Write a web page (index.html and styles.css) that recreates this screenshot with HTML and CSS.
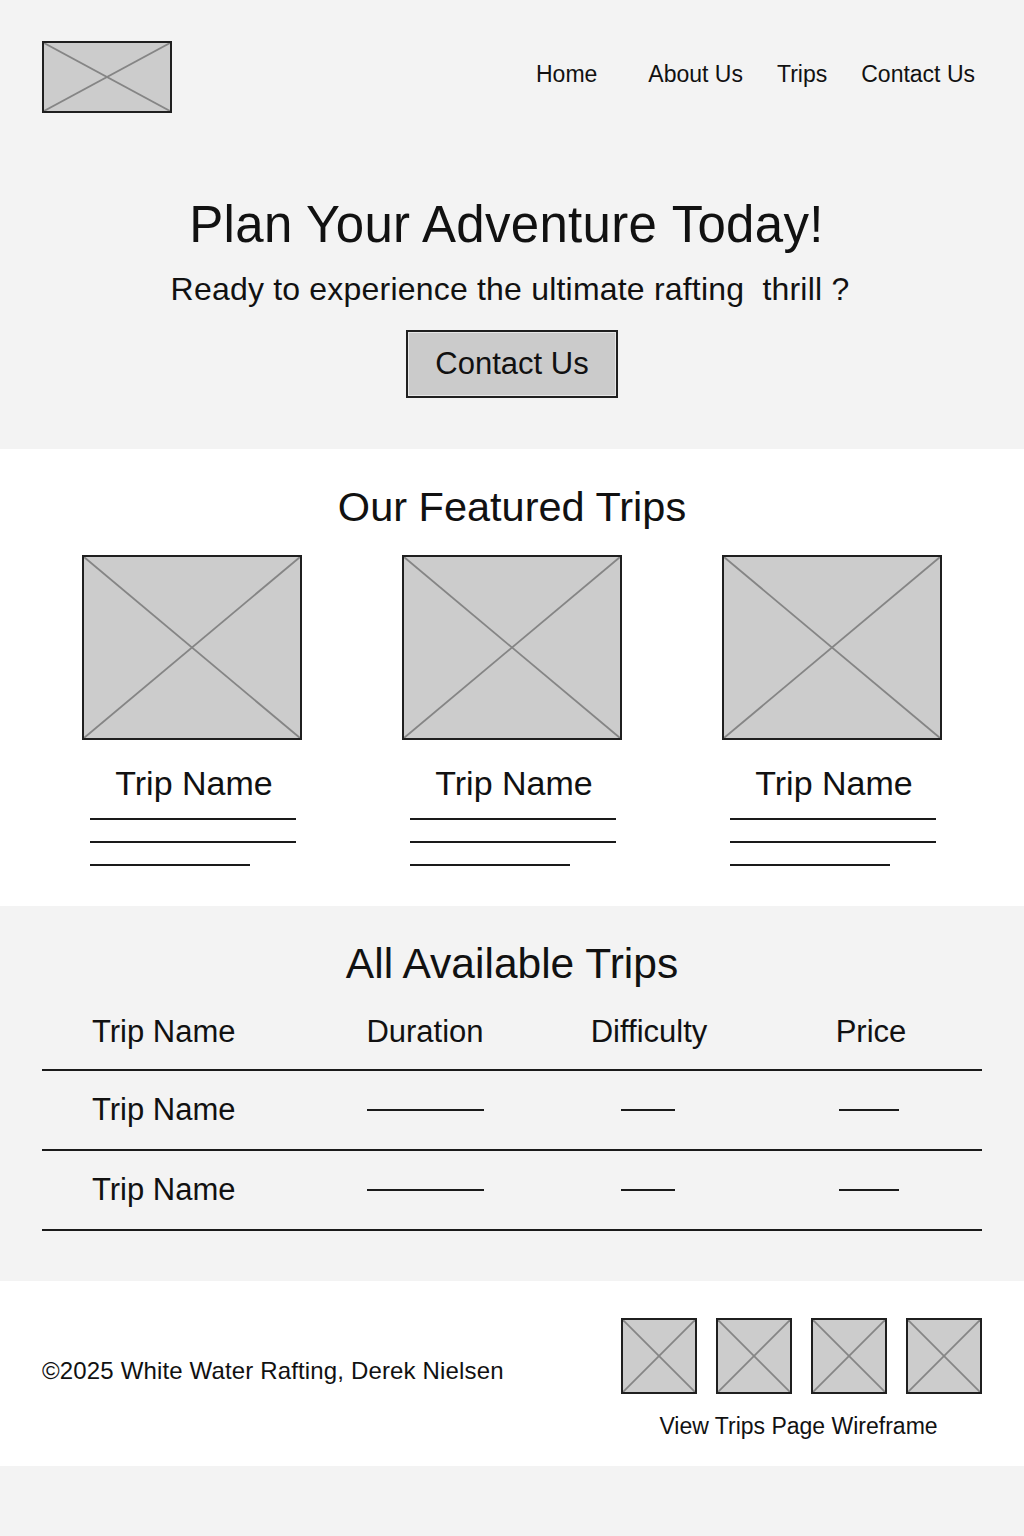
FILE: index.html
```html
<!DOCTYPE html>
<html lang="en">
<head>
<meta charset="utf-8">
<title>White Water Rafting</title>
<link rel="stylesheet" href="styles.css">
</head>
<body>
<div class="top">
  <header class="header">
    <div class="ph logo">
      <svg viewBox="0 0 100 100" preserveAspectRatio="none"><line x1="0" y1="0" x2="100" y2="100"/><line x1="100" y1="0" x2="0" y2="100"/></svg>
    </div>
    <nav class="nav">
      <a class="nav-link nav-home">Home</a>
      <a class="nav-link">About Us</a>
      <a class="nav-link">Trips</a>
      <a class="nav-link">Contact Us</a>
    </nav>
  </header>
  <section class="hero">
    <h1 class="hero-title">Plan Your Adventure&nbsp;Today!</h1>
    <p class="hero-sub">Ready to experience the ultimate rafting&nbsp; thrill ?</p>
    <button class="hero-btn">Contact Us</button>
  </section>
</div>

<section class="featured">
  <h2 class="section-title">Our Featured Trips</h2>
  <div class="cards">
    <div class="card">
      <div class="ph card-img"><svg viewBox="0 0 100 100" preserveAspectRatio="none"><line x1="0" y1="0" x2="100" y2="100"/><line x1="100" y1="0" x2="0" y2="100"/></svg></div>
      <div class="card-name">Trip Name</div>
      <div class="card-lines"><span class="ln"></span><span class="ln"></span><span class="ln short"></span></div>
    </div>
    <div class="card">
      <div class="ph card-img"><svg viewBox="0 0 100 100" preserveAspectRatio="none"><line x1="0" y1="0" x2="100" y2="100"/><line x1="100" y1="0" x2="0" y2="100"/></svg></div>
      <div class="card-name">Trip Name</div>
      <div class="card-lines"><span class="ln"></span><span class="ln"></span><span class="ln short"></span></div>
    </div>
    <div class="card">
      <div class="ph card-img"><svg viewBox="0 0 100 100" preserveAspectRatio="none"><line x1="0" y1="0" x2="100" y2="100"/><line x1="100" y1="0" x2="0" y2="100"/></svg></div>
      <div class="card-name">Trip Name</div>
      <div class="card-lines"><span class="ln"></span><span class="ln"></span><span class="ln short"></span></div>
    </div>
  </div>
</section>

<section class="all">
  <h2 class="section-title all-title">All Available Trips</h2>
  <div class="table">
    <div class="row head">
      <div class="cell first">Trip Name</div>
      <div class="cell">Duration</div>
      <div class="cell">Difficulty</div>
      <div class="cell">Price</div>
    </div>
    <div class="row">
      <div class="cell first">Trip Name</div>
      <div class="cell"><span class="dash d-long"></span></div>
      <div class="cell"><span class="dash d-short"></span></div>
      <div class="cell"><span class="dash d-mid"></span></div>
    </div>
    <div class="row">
      <div class="cell first">Trip Name</div>
      <div class="cell"><span class="dash d-long"></span></div>
      <div class="cell"><span class="dash d-short"></span></div>
      <div class="cell"><span class="dash d-mid"></span></div>
    </div>
  </div>
</section>

<footer class="footer">
  <p class="copy">©2025 White Water Rafting, Derek Nielsen</p>
  <div class="foot-right">
    <div class="thumbs">
      <div class="ph thumb"><svg viewBox="0 0 100 100" preserveAspectRatio="none"><line x1="0" y1="0" x2="100" y2="100"/><line x1="100" y1="0" x2="0" y2="100"/></svg></div>
      <div class="ph thumb"><svg viewBox="0 0 100 100" preserveAspectRatio="none"><line x1="0" y1="0" x2="100" y2="100"/><line x1="100" y1="0" x2="0" y2="100"/></svg></div>
      <div class="ph thumb"><svg viewBox="0 0 100 100" preserveAspectRatio="none"><line x1="0" y1="0" x2="100" y2="100"/><line x1="100" y1="0" x2="0" y2="100"/></svg></div>
      <div class="ph thumb"><svg viewBox="0 0 100 100" preserveAspectRatio="none"><line x1="0" y1="0" x2="100" y2="100"/><line x1="100" y1="0" x2="0" y2="100"/></svg></div>
    </div>
    <div class="foot-link">View Trips Page Wireframe</div>
  </div>
</footer>
</body>
</html>
```
FILE: styles.css
```css
* { box-sizing: border-box; }
html, body { margin: 0; padding: 0; }
body {
  background: #f3f3f3;
  color: #111;
  font-family: "Liberation Sans", Arial, sans-serif;
}
h1, h2, p { margin: 0; font-weight: normal; }

.ph {
  background: #cccccc;
  border: 2px solid #1f1f1f;
  position: relative;
}
.ph svg {
  display: block;
  width: 100%;
  height: 100%;
}
.ph line {
  stroke: #858585;
  stroke-width: 1.8;
  vector-effect: non-scaling-stroke;
}

/* header */
.top { background: #f3f3f3; }
.header {
  display: flex;
  justify-content: space-between;
  align-items: center;
  padding: 41px 49px 0 42px;
}
.logo { width: 130px; height: 72px; }
.nav {
  display: flex;
  gap: 34px;
  margin-bottom: 6px;
}
.nav-link {
  font-size: 23px;
  line-height: 28px;
  color: #111;
}
.nav-home { margin-right: 17px; }

/* hero */
.hero {
  display: flex;
  flex-direction: column;
  align-items: center;
  padding: 82px 0 51px;
}
.hero-title {
  font-size: 51px;
  line-height: 60px;
  letter-spacing: 0.3px;
  margin-left: -11px;
}
.hero-sub {
  font-size: 32px;
  line-height: 40px;
  letter-spacing: 0.2px;
  margin-top: 14px;
  margin-left: -4px;
}
.hero-btn {
  margin-top: 21px;
  width: 212px;
  height: 68px;
  background: #cbcbcb;
  border: 2px solid #1f1f1f;
  box-shadow: inset 0 0 0 1px #e6e6e6;
  font-family: inherit;
  font-size: 31px;
  color: #111;
  padding: 0;
}

/* featured */
.featured {
  background: #fff;
  padding: 33px 0 40px;
}
.section-title {
  text-align: center;
  font-size: 41.5px;
  line-height: 50px;
}
.cards {
  display: flex;
  justify-content: center;
  gap: 100px;
  margin-top: 23px;
}
.card { width: 220px; }
.card-img { width: 220px; height: 185px; }
.card-name {
  margin-top: 23px;
  font-size: 34px;
  line-height: 40px;
  text-align: center;
  padding-left: 4px;
}
.card-lines {
  display: flex;
  flex-direction: column;
  gap: 21px;
  margin-top: 15px;
  padding-left: 8px;
}
.ln {
  display: block;
  width: 206px;
  height: 2px;
  background: #1a1a1a;
}
.ln.short { width: 160px; }

/* all trips */
.all {
  background: #f3f3f3;
  padding: 33px 42px 50px;
}
.all-title { font-size: 42.5px; }
.table { margin-top: 2px; }
.row {
  display: grid;
  grid-template-columns: 270px 226px 222px 222px;
  height: 80px;
  border-bottom: 2px solid #1a1a1a;
  align-items: center;
}
.row.head { padding-top: 3px; }
.cell {
  font-size: 31px;
  line-height: 36px;
  text-align: center;
  display: flex;
  justify-content: center;
  align-items: center;
}
.cell.first {
  justify-content: flex-start;
  padding-left: 50px;
}
.dash {
  display: block;
  height: 2px;
  background: #1a1a1a;
}
.d-long { width: 117px; }
.d-short { width: 54px; margin-left: -2px; }
.d-mid { width: 60px; margin-left: -4px; }

/* footer */
.footer {
  background: #fff;
  display: flex;
  justify-content: space-between;
  align-items: flex-start;
  padding: 37px 42px 26px;
}
.copy {
  font-size: 24px;
  line-height: 28px;
  letter-spacing: 0.15px;
  margin-top: 39px;
}
.foot-right {
  display: flex;
  flex-direction: column;
  align-items: center;
}
.thumbs {
  display: flex;
  gap: 19px;
}
.thumb { width: 76px; height: 76px; }
.foot-link {
  margin-top: 18px;
  margin-right: 6px;
  font-size: 23px;
  line-height: 28px;
}
```
